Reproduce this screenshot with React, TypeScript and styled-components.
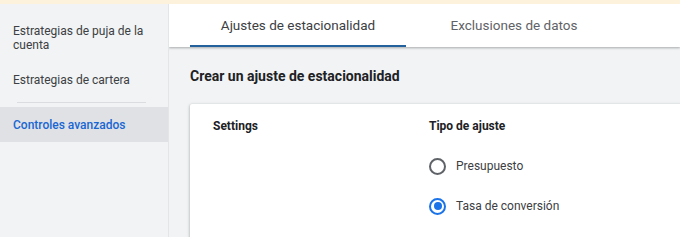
import React, { useState } from "react";
import styled, { createGlobalStyle } from "styled-components";

const GlobalStyle = createGlobalStyle`
  html, body {
    margin: 0;
    padding: 0;
    height: 100%;
  }
  body {
    font-family: Roboto, "Liberation Sans", Arial, sans-serif;
    color: #202124;
    background: #f1f3f4;
  }
  #root {
    height: 100%;
  }
`;

const Page = styled.div`
  display: flex;
  flex-direction: column;
  height: 100vh;
  overflow: hidden;
`;

const Banner = styled.div`
  height: 4px;
  flex: none;
  background: #fdf3dc;
`;

const Body = styled.div`
  display: flex;
  flex: 1;
  min-height: 0;
`;

const Sidebar = styled.nav`
  width: 169px;
  flex: none;
  background: #f1f3f4;
  border-right: 1px solid #e3e5e8;
  padding-top: 9px;
  box-sizing: border-box;
`;

const NavItem = styled.div<{ $active?: boolean }>`
  display: flex;
  align-items: center;
  min-height: 34px;
  padding: 11px 13px 10px;
  box-sizing: border-box;
  font-size: 12px;
  line-height: 14px;
  color: ${({ $active }) => ($active ? "#1967d2" : "#3c4043")};
  font-weight: ${({ $active }) => ($active ? 500 : 400)};
  background: ${({ $active }) => ($active ? "#dfe1e5" : "transparent")};
  cursor: pointer;
`;

const NavDivider = styled.hr`
  border: none;
  border-top: 1px solid #dadce0;
  margin: 5px 22px 4px 17px;
`;

const Main = styled.main`
  flex: 1;
  min-width: 0;
  display: flex;
  flex-direction: column;
  overflow: hidden;
`;

const TabBar = styled.div`
  height: 43px;
  flex: none;
  display: flex;
  padding-left: 21px;
  background: #fff;
  box-shadow: 0 1px 2px rgba(60, 64, 67, 0.3), 0 1px 3px rgba(60, 64, 67, 0.12);
  position: relative;
  z-index: 1;
`;

const Tab = styled.button<{ $active?: boolean }>`
  width: 216px;
  flex: none;
  border: none;
  background: none;
  padding: 0;
  font-family: inherit;
  font-size: 13.5px;
  color: ${({ $active }) => ($active ? "#3c4043" : "#5f6368")};
  border-bottom: 2px solid ${({ $active }) => ($active ? "#23619c" : "transparent")};
  cursor: pointer;
`;

const Content = styled.section`
  padding: 19px 0 0 21px;
`;

const Heading = styled.h2`
  margin: 0 0 18px;
  font-size: 14px;
  line-height: 20px;
  font-weight: 700;
  color: #202124;
`;

const Card = styled.div`
  width: 560px;
  background: #fff;
  border-radius: 2px;
  box-shadow: 0 1px 2px rgba(60, 64, 67, 0.3), 0 1px 3px 1px rgba(60, 64, 67, 0.15);
  display: grid;
  grid-template-columns: 216px 1fr;
  padding: 14px 23px 40px;
`;

const ColumnTitle = styled.div`
  font-size: 12px;
  line-height: 16px;
  font-weight: 700;
  color: #202124;
`;

const RadioGroup = styled.div`
  display: flex;
  flex-direction: column;
  gap: 18px;
  margin-top: 21px;
`;

const RadioRow = styled.label`
  display: flex;
  align-items: center;
  gap: 10px;
  height: 22px;
  font-size: 12px;
  color: #3c4043;
  cursor: pointer;
`;

const RadioCircle = styled.span<{ $checked?: boolean }>`
  width: 17px;
  height: 17px;
  box-sizing: border-box;
  border-radius: 50%;
  border: 2px solid ${({ $checked }) => ($checked ? "#1a73e8" : "#5f6368")};
  display: flex;
  align-items: center;
  justify-content: center;
  flex: none;

  &::after {
    content: "";
    width: 8px;
    height: 8px;
    border-radius: 50%;
    background: ${({ $checked }) => ($checked ? "#1a73e8" : "transparent")};
  }
`;

const options = ["Presupuesto", "Tasa de conversión"];

const App = () => {
  const [tab, setTab] = useState(0);
  const [choice, setChoice] = useState(1);

  return (
    <>
      <GlobalStyle />
      <Page>
        <Banner />
        <Body>
          <Sidebar>
            <NavItem>Estrategias de puja de la cuenta</NavItem>
            <NavItem>Estrategias de cartera</NavItem>
            <NavDivider />
            <NavItem $active>Controles avanzados</NavItem>
          </Sidebar>
          <Main>
            <TabBar>
              {["Ajustes de estacionalidad", "Exclusiones de datos"].map((t, i) => (
                <Tab key={t} $active={tab === i} onClick={() => setTab(i)}>
                  {t}
                </Tab>
              ))}
            </TabBar>
            <Content>
              <Heading>Crear un ajuste de estacionalidad</Heading>
              <Card>
                <ColumnTitle>Settings</ColumnTitle>
                <div>
                  <ColumnTitle>Tipo de ajuste</ColumnTitle>
                  <RadioGroup>
                    {options.map((o, i) => (
                      <RadioRow key={o} onClick={() => setChoice(i)}>
                        <RadioCircle $checked={choice === i} />
                        {o}
                      </RadioRow>
                    ))}
                  </RadioGroup>
                </div>
              </Card>
            </Content>
          </Main>
        </Body>
      </Page>
    </>
  );
};

export default App;
